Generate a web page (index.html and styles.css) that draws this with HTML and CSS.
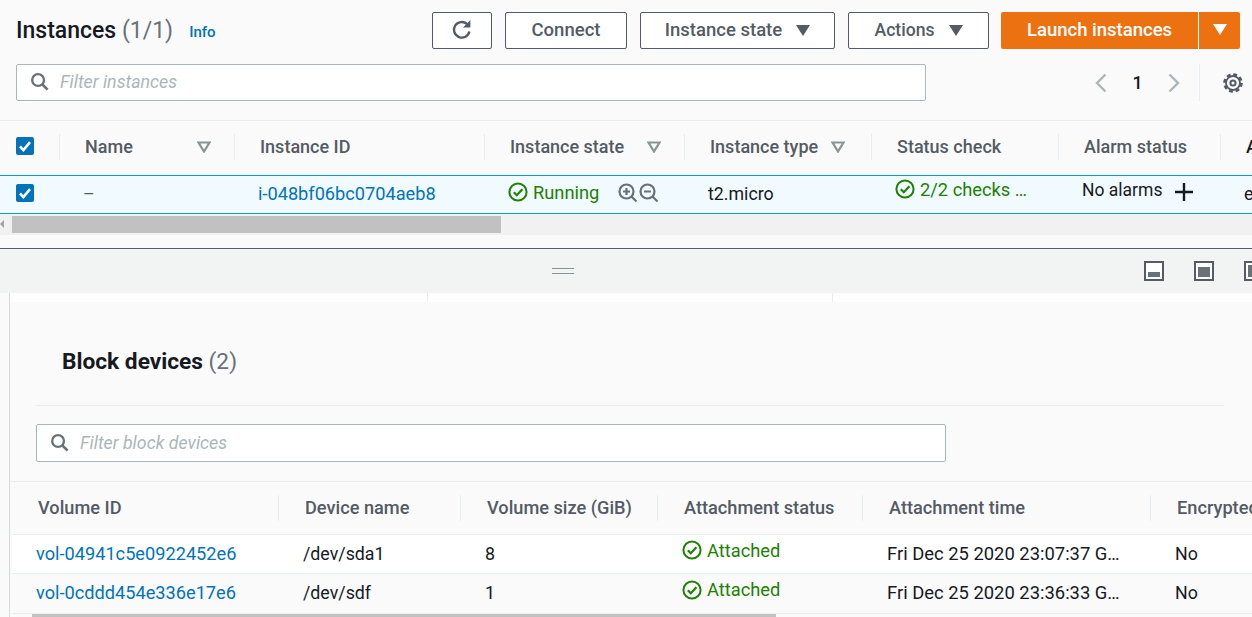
FILE: index.html
```html
<!DOCTYPE html>
<html lang="en">
<head>
    <meta charset="UTF-8">
    <meta name="viewport" content="width=device-width, initial-scale=1.0">
    <title>Instances</title>
    <link rel="stylesheet" href="styles.css">
</head>
<body>
    <svg class="sprites" width="0" height="0">
        <symbol id="search" viewBox="0 0 20 20"><circle cx="8.5" cy="8.5" r="6.2" fill="none" stroke="currentColor" stroke-width="2.4"/><path d="M13 13l5.5 5.5" fill="none" stroke="currentColor" stroke-width="2.8"/></symbol>
        <symbol id="ok" viewBox="0 0 20 20"><circle cx="10" cy="10" r="8.6" fill="none" stroke="currentColor" stroke-width="2"/><path d="M5.8 10.2l3 3 5.6-6" fill="none" stroke="currentColor" stroke-width="2.2"/></symbol>
        <symbol id="tick" viewBox="0 0 18 18"><path d="M4 9.5l3.4 3.6L14 5.2" fill="none" stroke="#fff" stroke-width="2.6"/></symbol>
        <symbol id="sort" viewBox="0 0 14 12"><path d="M1.5 1.5h11L7 10.5z" fill="none" stroke="currentColor" stroke-width="2.2"/></symbol>
    </svg>

    <div class="top">
        <div class="title-row">
            <h1>Instances <span class="count">(1/1)</span></h1>
            <a class="info">Info</a>
            <div class="actions">
                <button class="btn refresh"><svg width="22" height="22" viewBox="0 0 22 22"><path d="M18.4 12.500a7.800 7.800 0 1 1-2.500-7.600" fill="none" stroke="#545b64" stroke-width="2.400"/><path d="M19.400 1v7.400h-7.400z" fill="#545b64"/></svg></button>
                <button class="btn connect">Connect</button>
                <button class="btn state">Instance state<i class="caret"></i></button>
                <button class="btn more">Actions<i class="caret"></i></button>
                <div class="launch">
                    <button class="launch-main">Launch instances</button>
                    <button class="launch-drop"><i class="caret white"></i></button>
                </div>
            </div>
        </div>
        <div class="filter-row">
            <div class="filter"><svg class="mag"><use href="#search"/></svg><span>Filter instances</span></div>
            <div class="pager">
                <svg width="14" height="20" viewBox="0 0 14 20"><path d="M11.500 1.500L3 10l8.500 8.500" fill="none" stroke="#aab7b8" stroke-width="2.400"/></svg>
                <b>1</b>
                <svg width="14" height="20" viewBox="0 0 14 20"><path d="M2.500 1.500L11 10l-8.500 8.500" fill="none" stroke="#aab7b8" stroke-width="2.400"/></svg>
                <span class="pager-line"></span>
                <svg class="gear" width="20" height="20" viewBox="0 0 20 20"><circle cx="10" cy="10" r="8.300" fill="none" stroke="#545b64" stroke-width="3" stroke-dasharray="3.800 2.720"/><circle cx="10" cy="10" r="7" fill="none" stroke="#545b64" stroke-width="1.800"/><circle cx="10" cy="10" r="2.600" fill="none" stroke="#545b64" stroke-width="2"/></svg>
            </div>
        </div>
    </div>

    <table class="grid instances">
        <thead>
            <tr>
                <th class="check-col"><span class="check"><svg width="18" height="18"><use href="#tick"/></svg></span></th>
                <th><div class="th-in name-head">Name<svg class="sort"><use href="#sort"/></svg></div></th>
                <th><div class="th-in">Instance ID</div></th>
                <th><div class="th-in">Instance state<svg class="sort"><use href="#sort"/></svg></div></th>
                <th><div class="th-in type-head">Instance type<svg class="sort"><use href="#sort"/></svg></div></th>
                <th><div class="th-in">Status check</div></th>
                <th><div class="th-in">Alarm status</div></th>
                <th><div class="th-in dark">Availability Zone</div></th>
            </tr>
        </thead>
        <tbody>
            <tr class="selected">
                <td class="check-col"><span class="check"><svg width="18" height="18"><use href="#tick"/></svg></span></td>
                <td class="muted">–</td>
                <td><a>i-048bf06bc0704aeb8</a></td>
                <td><span class="status"><svg class="ok"><use href="#ok"/></svg>Running</span>
                    <span class="zooms">
                        <svg width="21" height="20" viewBox="0 0 21 20"><circle cx="8.500" cy="8.500" r="7" fill="none" stroke="#687078" stroke-width="2.200"/><path d="M13.500 13.500l5 5M8.500 5v7M5 8.500h7" fill="none" stroke="#687078" stroke-width="2.200"/></svg>
                        <svg width="21" height="20" viewBox="0 0 21 20"><circle cx="8.500" cy="8.500" r="7" fill="none" stroke="#687078" stroke-width="2.200"/><path d="M13.500 13.500l5 5M5 8.500h7" fill="none" stroke="#687078" stroke-width="2.200"/></svg>
                    </span>
                </td>
                <td>t2.micro</td>
                <td class="raised"><span class="status"><svg class="ok"><use href="#ok"/></svg>2/2 checks …</span></td>
                <td class="raised alarms">No alarms<svg class="plus" width="20" height="20" viewBox="0 0 20 20"><path d="M10 1v18M1 10h18" stroke="#16191f" stroke-width="2.400"/></svg></td>
                <td>eu-west-1a</td>
            </tr>
        </tbody>
    </table>

    <div class="hscroll">
        <i class="arrow"></i>
        <div class="thumb"></div>
    </div>

    <div class="split">
        <span class="grip"></span>
        <div class="split-icons">
            <span class="pane low"></span>
            <span class="pane mid"></span>
            <span class="pane side"></span>
        </div>
    </div>

    <div class="detail">
        <div class="strip">
            <span class="strip-a"></span>
            <span class="strip-b"></span>
        </div>
        <h2>Block devices <span class="count">(2)</span></h2>
        <div class="detail-filter">
            <div class="filter wide"><svg class="mag"><use href="#search"/></svg><span>Filter block devices</span></div>
        </div>
        <table class="grid volumes">
            <thead>
                <tr>
                    <th><div class="th-in">Volume ID</div></th>
                    <th><div class="th-in">Device name</div></th>
                    <th><div class="th-in">Volume size (GiB)</div></th>
                    <th><div class="th-in">Attachment status</div></th>
                    <th><div class="th-in">Attachment time</div></th>
                    <th><div class="th-in">Encrypted</div></th>
                </tr>
            </thead>
            <tbody>
                <tr>
                    <td><a>vol-04941c5e0922452e6</a></td>
                    <td>/dev/sda1</td>
                    <td>8</td>
                    <td class="raised"><span class="status"><svg class="ok"><use href="#ok"/></svg>Attached</span></td>
                    <td class="date">Fri Dec 25 2020 23:07:37 G…</td>
                    <td>No</td>
                </tr>
                <tr class="alt">
                    <td><a>vol-0cddd454e336e17e6</a></td>
                    <td>/dev/sdf</td>
                    <td>1</td>
                    <td class="raised"><span class="status"><svg class="ok"><use href="#ok"/></svg>Attached</span></td>
                    <td class="date">Fri Dec 25 2020 23:36:33 G…</td>
                    <td>No</td>
                </tr>
            </tbody>
        </table>
        <div class="bottom-scroll"><div class="bottom-thumb"></div></div>
    </div>
</body>
</html>
```

FILE: styles.css
```css
*{
    box-sizing: border-box;
}
html, body{
    height: 617px;
    overflow: hidden;
}
body{
    margin: 0;
    width: 1252px;
    background-color: #fafafa;
    color: #16191f;
    font: 17.8px Roboto, sans-serif;
}
.sprites{
    display: block;
    height: 0;
}
.top{
    height: 121px;
    padding: 12px 0 0 16px;
    border-bottom: 1px solid #eaeded;
}
.title-row{
    display: flex;
    align-items: center;
    height: 37px;
}
h1{
    margin: 0;
    font-size: 23px;
    font-weight: 500;
}
.count{
    color: #687078;
    font-weight: 400;
}
.info{
    margin: 3px 0 0 16px;
    color: #0073bb;
    font-size: 15px;
    font-weight: 500;
}
.actions{
    display: flex;
    gap: 13px;
    margin-left: auto;
    margin-right: 12px;
}
.btn{
    display: flex;
    align-items: center;
    justify-content: center;
    height: 37px;
    padding: 0 0 2px;
    border: 1px solid #545b64;
    border-radius: 2px;
    background: #fff;
    color: #545b64;
    font: 500 18.5px Roboto, sans-serif;
}
.refresh{
    width: 60px;
}
.connect{
    width: 122px;
}
.state{
    width: 195px;
}
.more{
    width: 141px;
    font-size: 17.6px;
}
.caret{
    width: 0;
    height: 0;
    margin: 2px 0 0 14px;
    border-left: 7px solid transparent;
    border-right: 7px solid transparent;
    border-top: 11px solid #545b64;
}
.caret.white{
    margin: 0;
    border-top-color: #fff;
}
.launch{
    display: flex;
    height: 37px;
    margin-left: -1px;
    border-radius: 2px;
    overflow: hidden;
    background: #ec7211;
}
.launch button{
    height: 37px;
    border: 0;
    background: transparent;
    color: #fff;
    font: 500 18.5px Roboto, sans-serif;
}
.launch-main{
    width: 197px;
    padding: 0 0 2px;
}
.launch-drop{
    display: flex;
    align-items: center;
    justify-content: center;
    width: 42px;
    padding: 0 0 2px;
    border-left: 1px solid #fff !important;
}
.filter-row{
    display: flex;
    align-items: center;
    margin-top: 15px;
}
.filter{
    display: flex;
    align-items: center;
    width: 910px;
    height: 37px;
    padding: 0 0 2px 13px;
    border: 1px solid #aab7b8;
    border-radius: 2px;
    background: #fff;
    color: #aab7b8;
    font-style: italic;
}
.mag{
    width: 19px;
    height: 19px;
    margin-right: 11px;
    color: #687078;
}
.pager{
    display: flex;
    align-items: center;
    margin-left: 168px;
}
.pager b{
    width: 59px;
    text-align: center;
    font-weight: 500;
}
.pager-line{
    width: 1px;
    height: 37px;
    margin: 0 23px 0 18px;
    background: #eaeded;
}
.grid{
    border-collapse: collapse;
    table-layout: fixed;
}
.grid th{
    height: 54px;
    padding: 0 0 2px;
    text-align: left;
    vertical-align: middle;
    font-size: 18.2px;
    font-weight: 500;
    color: #545b64;
}
.th-in{
    display: flex;
    align-items: center;
    height: 26px;
    padding-left: 25px;
    border-left: 1px solid #eaeded;
    white-space: nowrap;
}
.grid td{
    padding: 0 0 2px 24px;
    white-space: nowrap;
    overflow: hidden;
}
.grid a{
    color: #0073bb;
    font-size: 18.2px;
}
.dark{
    color: #16191f;
}
.sort{
    width: 14px;
    height: 12px;
    margin-left: 23px;
    color: #879596;
}
.name-head .sort{
    margin-left: 64px;
}
.type-head .sort{
    margin-left: 13px;
}
.instances{
    width: 1280px;
}
.grid.instances th{
    font-size: 18px;
}
.instances th:nth-child(1){ width: 59px; }
.instances th:nth-child(2){ width: 175px; }
.instances th:nth-child(3){ width: 250px; }
.instances th:nth-child(4){ width: 200px; }
.instances th:nth-child(5){ width: 187px; }
.instances th:nth-child(6){ width: 187px; }
.instances th:nth-child(7){ width: 162px; }
.instances th:nth-child(8){ width: 60px; }
.grid.instances th.check-col{
    padding: 0 0 4px 16px;
}
.grid.instances td.check-col{
    padding: 0 0 2px 16px;
}
.instances tbody tr{
    height: 38px;
    border-top: 1px solid #00a1c9;
    border-bottom: 1px solid #00a1c9;
    background: #f1faff;
}
.check{
    display: flex;
    width: 18px;
    height: 18px;
    border-radius: 2px;
    background: #0073bb;
}
.muted{
    color: #545b64;
}
.status{
    display: inline-flex;
    align-items: center;
    vertical-align: middle;
    margin-bottom: 2px;
    font-size: 18.3px;
    color: #1d8102;
}
.ok{
    width: 20px;
    height: 20px;
    margin-right: 5px;
}
.zooms{
    display: inline-flex;
    vertical-align: middle;
    margin-left: 14px;
}
.grid td.raised{
    padding-bottom: 8px;
}
.grid.volumes td.raised{
    padding-bottom: 6px;
}
.grid td.alarms{
    padding-bottom: 6px;
    font-size: 17.5px;
}
.plus{
    margin-left: 12px;
    vertical-align: middle;
}
.date{
    font-size: 18.4px;
}
.hscroll{
    position: relative;
    height: 21px;
    padding-top: 2px;
    background: #f1f1f1;
}
.thumb{
    width: 489px;
    height: 17px;
    margin-left: 12px;
    background: #c1c1c1;
}
.arrow{
    position: absolute;
    left: 0;
    top: 6px;
    border-top: 4px solid transparent;
    border-bottom: 4px solid transparent;
    border-right: 4px solid #a3a3a3;
}
.split{
    display: flex;
    align-items: center;
    height: 45px;
    margin-top: 13px;
    border-top: 1px solid #545b64;
    background: #f2f3f3;
}
.grip{
    display: block;
    flex: none;
    width: 22px;
    height: 6px;
    margin-left: 552px;
    border-top: 1px solid #879596;
    border-bottom: 1px solid #879596;
}
.split-icons{
    display: flex;
    gap: 30px;
    margin-left: 570px;
}
.pane{
    display: flex;
    flex: none;
    width: 20px;
    height: 20px;
    border: 2px solid #545b64;
    background: #fff;
    position: relative;
}
.pane::after{
    content: "";
    position: absolute;
    left: 2px;
    right: 2px;
    bottom: 2px;
    height: 5px;
    background: #687078;
}
.pane.mid::after{
    height: 10px;
}
.pane.side::after{
    top: 2px;
    height: auto;
    right: 8px;
}
.detail{
    height: 324px;
    margin-left: 9px;
    border-left: 1px solid #d5dbdb;
    overflow: hidden;
}
.strip{
    display: flex;
    height: 9px;
    background: #fff;
}
.strip span{
    display: block;
    width: 1px;
    background: #eaeded;
}
.strip-a{
    margin-left: 417px;
}
.strip-b{
    margin-left: 404px;
}
h2{
    height: 104px;
    margin: 0 28px 0 26px;
    padding: 46px 0 0 26px;
    border-bottom: 1px solid #eaeded;
    font-size: 22.7px;
    font-weight: 700;
}
.detail-filter{
    height: 76px;
    padding: 18px 0 0 26px;
    border-bottom: 1px solid #eaeded;
}
.wide{
    width: 910px;
    height: 38px;
    padding-bottom: 0;
}
.volumes{
    width: 1300px;
    margin-left: 2px;
}
.volumes th{
    height: 53px;
}
.grid.volumes th{
    padding-bottom: 0;
}
.volumes .th-in{
    padding-left: 26px;
}
.volumes th:nth-child(1){ width: 266px; }
.volumes th:nth-child(2){ width: 182px; }
.volumes th:nth-child(3){ width: 197px; }
.volumes th:nth-child(4){ width: 205px; }
.volumes th:nth-child(5){ width: 288px; }
.volumes th:nth-child(6){ width: 162px; }
.volumes th:first-child .th-in{
    border-left: 0;
}
.volumes td{
    padding-left: 25px;
}
.grid.volumes td{
    padding-left: 25px;
}
.grid.volumes td:first-child{
    padding-left: 24px;
}
.volumes tbody tr{
    height: 39px;
    border-top: 1px solid #eaeded;
    background: #fff;
}
.volumes tbody tr.alt{
    background: #fafafa;
}
.bottom-scroll{
    height: 4px;
    margin-left: 2px;
    border-top: 1px solid #eaeded;
}
.bottom-thumb{
    width: 744px;
    height: 3px;
    margin-left: 20px;
    background: #c1c1c1;
}
```
